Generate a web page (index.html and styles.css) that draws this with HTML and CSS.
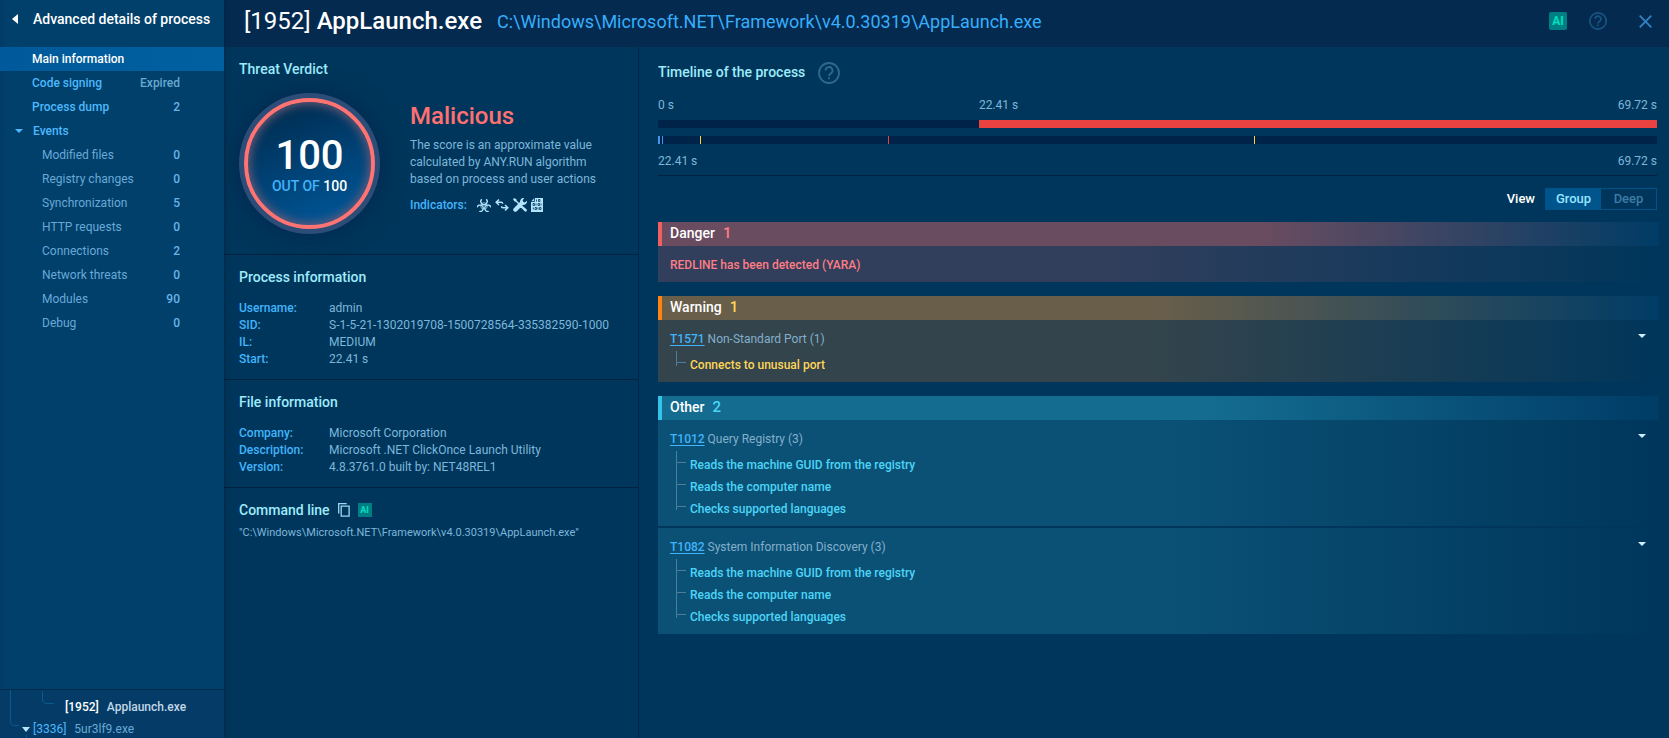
FILE: index.html
```html
<!DOCTYPE html>
<html lang="en">
<head>
<meta charset="utf-8">
<title>Advanced details of process</title>
<link rel="stylesheet" href="styles.css">
</head>
<body>
<div class="app">
  <aside class="sidebar">
    <div class="side-head">
      <button class="back" aria-label="Back"><svg width="6" height="10" viewBox="0 0 6 10"><path d="M6 0v10L0 5z" fill="currentColor"/></svg></button>
      <h1 class="side-title">Advanced details of process</h1>
    </div>
    <nav class="menu">
      <a class="row active" href="#main"><span>Main information</span></a>
      <a class="row" href="#sign"><span>Code signing</span><span class="dim">Expired</span></a>
      <a class="row" href="#dump"><span>Process dump</span><span class="num">2</span></a>
      <a class="row parent" href="#events"><svg width="8" height="4" viewBox="0 0 8 4"><path d="M0 0h8L4 4z" fill="currentColor"/></svg><span>Events</span></a>
      <a class="row sub" href="#files"><span>Modified files</span><span class="num">0</span></a>
      <a class="row sub" href="#registry"><span>Registry changes</span><span class="num">0</span></a>
      <a class="row sub" href="#sync"><span>Synchronization</span><span class="num">5</span></a>
      <a class="row sub" href="#http"><span>HTTP requests</span><span class="num">0</span></a>
      <a class="row sub" href="#connections"><span>Connections</span><span class="num">2</span></a>
      <a class="row sub" href="#threats"><span>Network threats</span><span class="num">0</span></a>
      <a class="row sub" href="#modules"><span>Modules</span><span class="num">90</span></a>
      <a class="row sub" href="#debug"><span>Debug</span><span class="num">0</span></a>
    </nav>
    <div class="tree">
      <svg class="tree-lines" width="60" height="48" viewBox="0 0 60 48" fill="none" stroke="#0a5a8f"><path d="M10.500 0v31q0 4.500 4.500 4.500h4M42.500 1v8q0 4.500 4.500 4.500h7M26.500 45v3"/></svg>
      <a class="tree-row selected" href="#p1952"><b>[1952]</b><span>Applaunch.exe</span></a>
      <a class="tree-row" href="#p3336"><svg width="8" height="5" viewBox="0 0 8 5"><path d="M0 0h8L4 5z" fill="#b9e4ff"/></svg><b>[3336]</b><span>5ur3lf9.exe</span></a>
    </div>
  </aside>

  <div class="page">
    <header class="topbar">
      <h2 class="proc">[1952] <b>AppLaunch.exe</b></h2>
      <span class="path">C:\Windows\Microsoft.NET\Framework\v4.0.30319\AppLaunch.exe</span>
      <div class="tools">
        <button class="ai">AI</button>
        <button class="help" aria-label="Help"><svg width="18" height="18" viewBox="0 0 22 22" fill="none" stroke="currentColor" stroke-width="2"><circle cx="11" cy="11" r="10"/><path d="M7.500 8.500a3.500 3.500 0 1 1 5.200 3.100c-1.200.7-1.700 1.200-1.700 2.400M11 15.300v2"/></svg></button>
        <button class="close" aria-label="Close"><svg width="13" height="13" viewBox="0 0 13 13" stroke="currentColor" stroke-width="1.800"><path d="M.7.700l11.600 11.600M12.300.7.700 12.300"/></svg></button>
      </div>
    </header>

    <div class="columns">
      <div class="info">
        <section class="block verdict">
          <h3>Threat Verdict</h3>
          <div class="verdict-body">
            <div class="ring"><div class="score">
              <strong>100</strong>
              <span class="outof">OUT OF <b>100</b></span>
            </div></div>
            <div class="verdict-text">
              <p class="level">Malicious</p>
              <p class="desc">The score is an approximate value<br>calculated by ANY.RUN algorithm<br>based on process and user actions</p>
              <div class="indicators"><span>Indicators:</span>
                <svg width="14" height="14" viewBox="0 0 28 28" fill="none" stroke="currentColor" stroke-width="2.600"><path id="horn" d="M9.500 2.500a6.300 6.300 0 1 0 9 0"/><use href="#horn" transform="rotate(120 14 16)"/><use href="#horn" transform="rotate(240 14 16)"/><circle cx="14" cy="16" r="6.500" stroke-width="1.500"/></svg>
                <svg width="14" height="14" viewBox="0 0 14 14" fill="none" stroke="currentColor" stroke-width="1.500"><path d="M4 1.500 1.200 4.300 4 7M1.500 4.300h4.700q1.500 0 1.500 1.500M10 7l2.800 2.700L10 12.500M12.500 9.700H8q-1.500 0-1.500-1.500"/></svg>
                <svg width="14" height="14" viewBox="0 0 14 14" fill="currentColor"><path d="M1.200 0 0 1.200l1.600 2.300 1.200.2 3.100 3.100 1-1L3.800 2.700l-.2-1.200zM8.800 7.200 7.300 8.700l4.300 4.500q1 .9 1.900 0 .9-1 0-1.900zM14 2.700l-2.200 1.800-1.600-.7-.6-1.600L11.300 0Q7.300-.4 7 4L.8 10.200Q-.5 11.700.8 13.200q1.500 1.300 3 0L10 7q4.300-.3 4-4.300z"/></svg>
                <svg width="12" height="14" viewBox="0 0 12 14"><path d="M3.500 0H12v14H0V3.500z" fill="currentColor"/><path d="M3.500 0v3.500H0M2 5.500h1.500v2H2zM5 5.500v2M7 5.500h1.500v2H7zM10 5.500v2M2.300 9.500v2M4 9.500h1.500v2H4zM7 9.500v2M8.500 9.500H10v2H8.500zM5.500 1.500v2M7.500 1.500H9v2H7.500z" fill="none" stroke="#00365b" stroke-width=".8"/></svg>
              </div>
            </div>
          </div>
        </section>
        <section class="block">
          <h3>Process information</h3>
          <dl><dt>Username:</dt><dd>admin</dd><dt>SID:</dt><dd>S-1-5-21-1302019708-1500728564-335382590-1000</dd><dt>IL:</dt><dd>MEDIUM</dd><dt>Start:</dt><dd>22.41 s</dd></dl>
        </section>
        <section class="block">
          <h3>File information</h3>
          <dl><dt>Company:</dt><dd>Microsoft Corporation</dd><dt>Description:</dt><dd>Microsoft .NET ClickOnce Launch Utility</dd><dt>Version:</dt><dd>4.8.3761.0 built by: NET48REL1</dd></dl>
        </section>
        <section class="block cmd">
          <div class="cmd-head">
            <h3>Command line</h3>
            <button class="copy" aria-label="Copy"><svg width="12" height="14" viewBox="0 0 12 14" fill="none" stroke="currentColor" stroke-width="1.300"><path d="M.7 10.500V.7h8M3.200 3.200h7.900v9.900H3.200z"/></svg></button>
            <button class="ai small">AI</button>
          </div>
          <p class="cmd-text">"C:\Windows\Microsoft.NET\Framework\v4.0.30319\AppLaunch.exe"</p>
        </section>
      </div>

      <main class="events">
        <div class="timeline">
          <div class="timeline-head">
            <h3>Timeline of the process</h3>
            <button class="help big" aria-label="About the timeline"><svg width="22" height="22" viewBox="0 0 22 22" fill="none" stroke="currentColor" stroke-width="1.800"><circle cx="11" cy="11" r="10"/><path d="M7.500 8.500a3.500 3.500 0 1 1 5.200 3.100c-1.200.7-1.700 1.200-1.700 2.400M11 15.300v2"/></svg></button>
          </div>
          <div class="scale"><span style="width:32.13%">0 s</span><span>22.41 s</span><span class="end">69.72 s</span></div>
          <div class="track"><div class="life" style="width:67.87%"></div></div>
          <div class="track">
            <i class="mark blue wide" style="left:0%"></i><i class="mark blue" style="left:0.4%"></i><i class="mark yellow" style="left:4.2%"></i><i class="mark red" style="left:23%"></i><i class="mark yellow" style="left:59.66%"></i>
          </div>
          <div class="scale under"><span>22.41 s</span><span class="end">69.72 s</span></div>
        </div>
        <div class="view">
          <span class="view-label" id="view">View</span>
          <div class="toggle" role="group" aria-labelledby="view"><button class="on">Group</button><button>Deep</button></div>
        </div>

        <section class="group danger">
          <h4><span>Danger</span><span class="count">1</span></h4>
          <div class="case plain">REDLINE has been detected (YARA)</div>
        </section>
        <section class="group warning">
          <h4><span>Warning</span><span class="count">1</span></h4>
          <div class="case">
            <div class="case-head"><p><a href="#t1571">T1571</a> Non-Standard Port (1)</p><button class="fold" aria-label="Collapse"><svg width="8" height="4" viewBox="0 0 8 4"><path d="M0 0h8L4 4z" fill="currentColor"/></svg></button></div>
            <ul><li>Connects to unusual port</li></ul>
          </div>
        </section>
        <section class="group other">
          <h4><span>Other</span><span class="count">2</span></h4>
          <div class="case">
            <div class="case-head"><p><a href="#t1012">T1012</a> Query Registry (3)</p><button class="fold" aria-label="Collapse"><svg width="8" height="4" viewBox="0 0 8 4"><path d="M0 0h8L4 4z" fill="currentColor"/></svg></button></div>
            <ul><li>Reads the machine GUID from the registry</li><li>Reads the computer name</li><li>Checks supported languages</li></ul>
          </div>
          <div class="case">
            <div class="case-head"><p><a href="#t1082">T1082</a> System Information Discovery (3)</p><button class="fold" aria-label="Collapse"><svg width="8" height="4" viewBox="0 0 8 4"><path d="M0 0h8L4 4z" fill="currentColor"/></svg></button></div>
            <ul><li>Reads the machine GUID from the registry</li><li>Reads the computer name</li><li>Checks supported languages</li></ul>
          </div>
        </section>
      </main>
    </div>
  </div>
</div>
</body>
</html>
```

FILE: styles.css
```css
* { box-sizing: border-box; }
body, h1, h2, h3, h4, p, dl, dd, ul { margin: 0; padding: 0; }
body {
  background: #00365b;
  color: #7db6dc;
  font: 400 12px/16px Roboto, "Liberation Sans", sans-serif;
}
svg { display: block; flex: none; }
a { color: inherit; text-decoration: none; }
button {
  padding: 0;
  border: 0;
  background: none;
  color: inherit;
  font: inherit;
}
h3 { color: #9eebfb; font-size: 14px; font-weight: 500; line-height: 20px; }

.app { display: flex; height: 100vh; overflow: hidden; }

/* Sidebar */
.sidebar {
  display: flex;
  flex: none;
  flex-direction: column;
  width: 224px;
  background: linear-gradient(90deg, #003b65, #00406b 8px);
  box-shadow: 0 0 4px #00203c;
  z-index: 1;
}
.side-head {
  display: flex;
  align-items: center;
  gap: 15px;
  height: 47px;
  padding: 0 12px 10px;
  color: #fff;
}
.side-title { font-size: 14px; font-weight: 500; line-height: 20px; white-space: nowrap; }
.menu { flex: 1; }
.row {
  display: flex;
  align-items: center;
  justify-content: space-between;
  height: 24px;
  padding: 0 44px 0 32px;
  color: #4db8fb;
  font-weight: 500;
}
.row.active { background: linear-gradient(90deg, #00599a, #0061a0); color: #fff; }
.row.parent { justify-content: flex-start; gap: 10px; padding-left: 15px; }
.row.sub { padding-left: 42px; color: #68a9d8; font-weight: 400; }
.row .num { color: #68b4e8; font-weight: 500; }
.row .dim { color: #68a9d0; }
.tree {
  position: relative;
  height: 49px;
  padding-top: 6px;
  border-top: 1px solid #002b50;
  background: #043c67;
}
.tree-lines { position: absolute; top: 0; left: 0; }
.tree-row {
  display: flex;
  align-items: center;
  gap: 3px;
  height: 22px;
  padding-left: 22px;
  color: #4db8fb;
}
.tree-row b { font-size: 12px; font-weight: 400; }
.tree-row span { padding-left: 5px; color: #68a9d8; }
.tree-row.selected { padding-left: 65px; color: #fff; }
.tree-row.selected b { font-weight: 500; }
.tree-row.selected span { color: #c3d7e7; font-weight: 500; }

/* Top bar */
.page { display: flex; flex: 1; flex-direction: column; min-width: 0; }
.topbar {
  display: flex;
  align-items: center;
  gap: 15px;
  height: 47px;
  padding: 0 17px 5px 20px;
  background: #042a4f;
}
.proc { color: #fff; font-size: 24px; font-weight: 400; line-height: 32px; white-space: nowrap; }
.proc b { font-weight: 500; }
.path { padding-top: 2px; color: #36aefc; font-size: 18px; line-height: 28px; white-space: nowrap; }
.tools { display: flex; align-items: center; gap: 22px; margin-left: auto; }
.ai {
  width: 18px;
  height: 18px;
  border-radius: 2px;
  background: #007f82;
  color: #00dfc0;
  font-size: 12px;
  font-weight: 700;
  line-height: 18px;
}
.ai.small { width: 14px; height: 14px; border-radius: 0; font-size: 9px; line-height: 14px; }
.help { color: #185585; }
.help.big { color: #2f678d; }
.close { margin-left: 10px; color: #3183c5; }

.columns { display: grid; flex: 1; grid-template-columns: 415px 1fr; }

/* Process facts */
.info { border-right: 1px solid #00264a; }
.block { padding: 12px 14px 0 15px; border-bottom: 1px solid #00213f; }
.block dl {
  display: grid;
  grid-template-columns: 90px 1fr;
  padding: 13px 0 11px;
  line-height: 17px;
}
.block dt { color: #41b4fb; font-weight: 500; }
.block.verdict { padding-bottom: 20px; }
.block.cmd { border: 0; }
.verdict-body { display: flex; gap: 30px; padding-top: 14px; }
.ring {
  flex: none;
  width: 141px;
  height: 141px;
  padding: 5px;
  border-radius: 50%;
  background: #2b4d77;
  box-shadow: 0 0 24px #03264e;
}
.score {
  display: flex;
  flex-direction: column;
  align-items: center;
  justify-content: center;
  height: 100%;
  padding-top: 5px;
  border: 4px solid #ff7373;
  border-radius: 50%;
  background: linear-gradient(160deg, #003056 15%, #005596 90%);
  box-shadow: inset 0 0 10px 2px #6a5a76;
}
.score strong { color: #fff; font-size: 40px; font-weight: 500; line-height: 40px; }
.outof { color: #41b4fb; font-size: 14px; font-weight: 500; line-height: 20px; }
.outof b { color: #fff; font-weight: 500; }
.verdict-text { padding-top: 7px; }
.level { color: #ff7070; font-size: 24px; font-weight: 500; line-height: 32px; }
.desc { padding: 5px 0 9px; line-height: 17px; }
.indicators { display: flex; align-items: center; gap: 4px; color: #b4e4fb; }
.indicators span { padding-right: 6px; color: #41b4fb; font-weight: 500; }
.cmd-head { display: flex; align-items: center; gap: 8px; }
.copy { color: #9ed8f3; }
.cmd-text { padding-top: 5px; font-size: 11px; }

/* Timeline */
.events { padding: 15px 12px 0 19px; }
.timeline { border-bottom: 1px solid #00213f; padding-bottom: 6px; }
.timeline-head { display: flex; align-items: center; gap: 13px; }
.timeline-head h3 { padding-bottom: 2px; }
.scale { display: flex; padding: 13px 0 7px; }
.scale .end { margin-left: auto; }
.scale.under { padding: 1px 0 0; }
.track { position: relative; display: flex; justify-content: flex-end; height: 8px; margin-bottom: 8px; background: #002449; }
.life { background: #ea4141; }
.mark { position: absolute; top: 0; width: 1px; height: 8px; }
.mark.wide { width: 2px; }
.blue { background: #4298ed; }
.yellow { background: #f5d83a; }
.red { background: #ea4141; }
.view { display: flex; align-items: center; justify-content: flex-end; gap: 10px; padding: 12px 0; }
.view-label { color: #fff; font-size: 13px; font-weight: 500; }
.toggle { display: flex; height: 22px; border: 1px solid #005288; }
.toggle button { width: 55px; color: #3e7ba5; font-size: 13px; font-weight: 500; }
.toggle .on { background: #00558d; color: #98e6ff; }

/* Event groups */
.group { margin: 0 -2px 14px 0; }
.group h4 {
  display: flex;
  align-items: center;
  gap: 8px;
  height: 24px;
  padding: 0 8px 2px;
  border-left: 4px solid;
  color: #fff;
  font-size: 14px;
  font-weight: 500;
}
.count { font-size: 15px; }
.danger h4 { border-color: #f06060; background: linear-gradient(90deg, #6a4c60 60%, #003c66); }
.danger .case { background: linear-gradient(90deg, #313e5c 45%, #00365b); color: #ff7d83; font-weight: 500; }
.danger .count { color: #ff7d83; }
.warning h4 { border-color: #ff8412; background: linear-gradient(90deg, #685e4a 50%, #003c66); }
.warning .case { background: linear-gradient(90deg, #33444c 50%, #00365b); }
.warning .count, .warning li { color: #ffd658; }
.other h4 { border-color: #35c4e8; background: linear-gradient(90deg, #146c91 55%, #003c66); }
.other .case { background: linear-gradient(90deg, #0b5176 50%, #00365b); }
.other .count, .other li { color: #4cd5f7; }
.case { padding: 11px 12px 6px; }
.case + .case { margin-top: 2px; }
.case.plain { padding: 11px 12px 9px; }
.case-head { display: flex; align-items: center; justify-content: space-between; color: #83afcb; }
.case-head a { color: #41b4fb; font-weight: 500; text-decoration: underline; text-underline-offset: 2px; }
.fold { padding: 0 1px 6px; color: #cdefff; }
.case ul { padding: 7px 0 0 6px; list-style: none; }
.case li { position: relative; padding: 3px 0 3px 14px; font-weight: 500; }
.case li::before {
  position: absolute;
  top: -3px;
  left: 0;
  width: 9px;
  height: 11px;
  border: solid #4f7c98;
  border-width: 0 0 1px 1px;
  content: "";
}
.case li::after {
  position: absolute;
  top: 8px;
  bottom: 10px;
  left: 0;
  border-left: 1px solid #4f7c98;
  content: "";
}
.case li:not(:last-child)::after { bottom: 0; }
```
